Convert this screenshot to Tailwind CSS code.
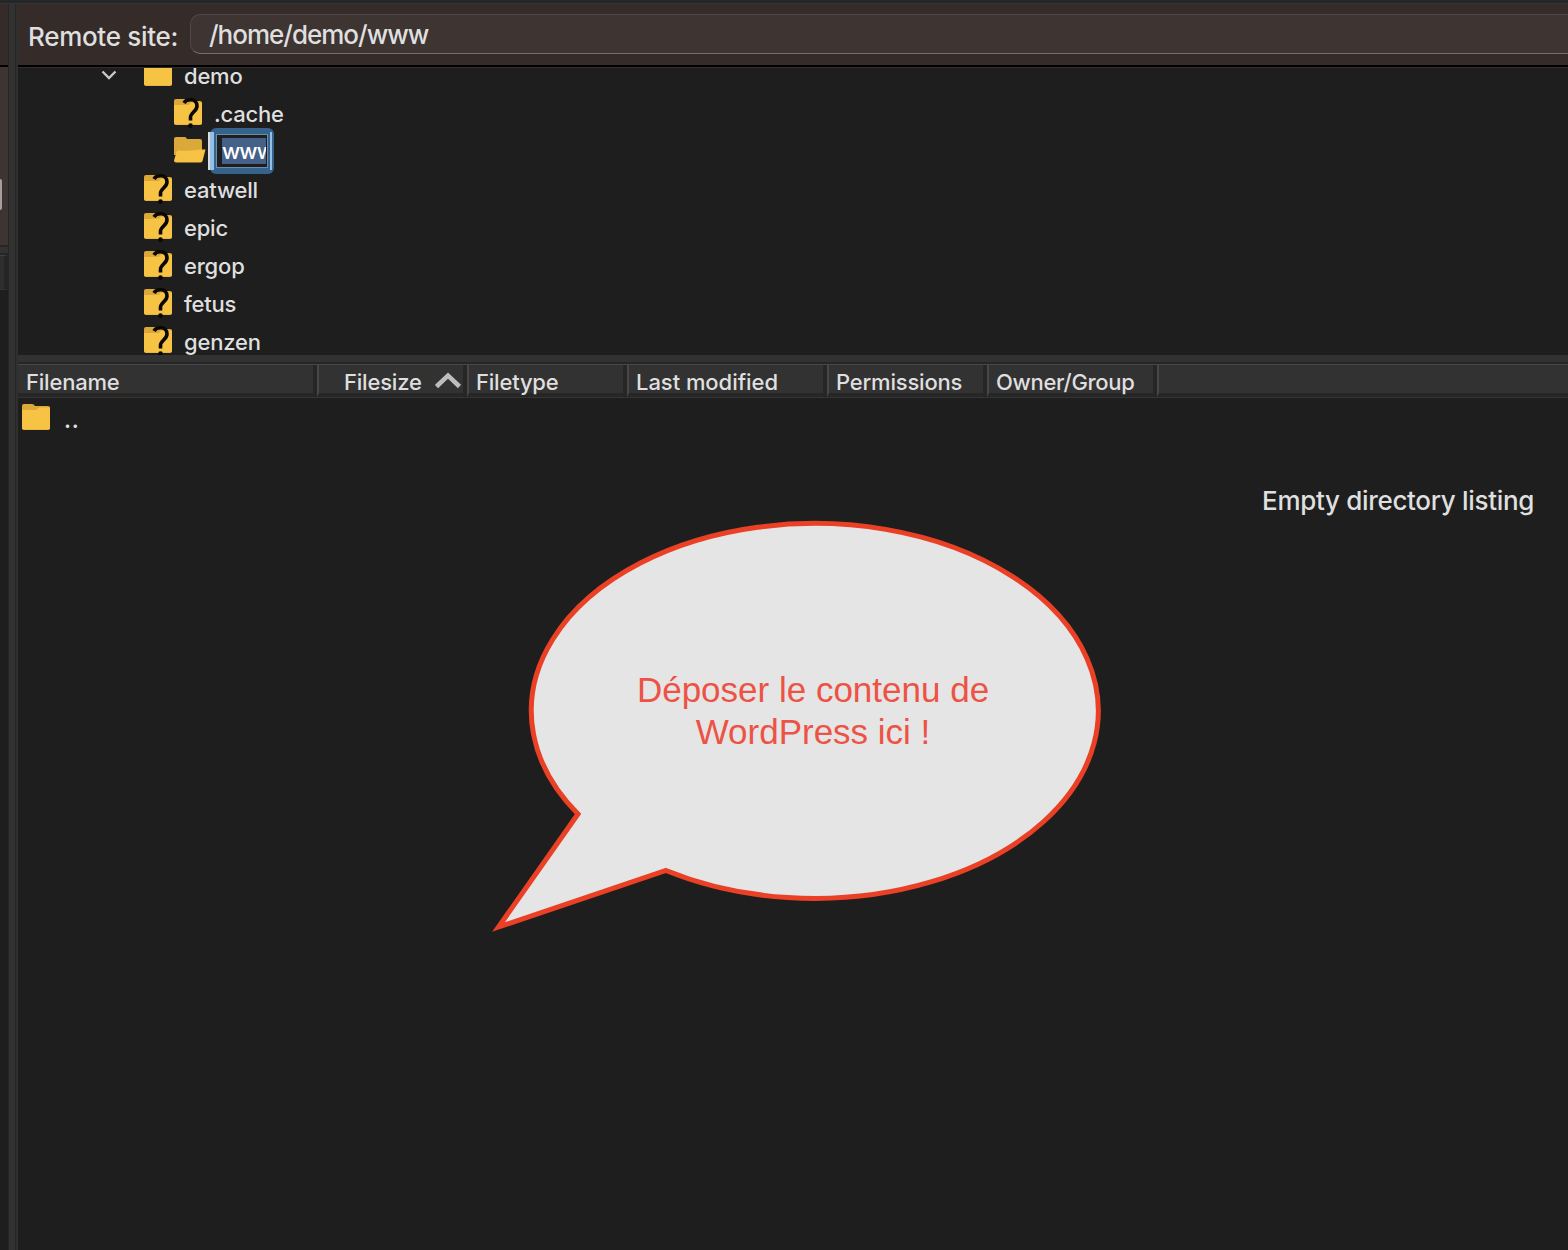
<!DOCTYPE html>
<html lang="en">
<head>
<meta charset="utf-8">
<title>Remote site</title>
<script src="https://cdn.jsdelivr.net/npm/@tailwindcss/browser@4"></script>
</head>
<body class="relative flex h-[1250px] w-[1568px] flex-col overflow-hidden bg-[#1e1e1e] font-['Inter',sans-serif] text-[22px] font-[450] tracking-[-0.2px] text-[#dfdfdf]">
<svg class="hidden">
  <symbol id="folder" viewBox="0 0 28 26"><path d="M0 2Q0 0 2 0H10Q12 0 13 2H26Q28 2 28 4V24Q28 26 26 26H2Q0 26 0 24Z" fill="#dba83a"/><path d="M0 6H14Q15 6 16 4.500Q17 3.500 18 3.500H28V23.500Q28 25.500 26 25.500H2Q0 25.500 0 23.500Z" fill="#f6c344"/></symbol>
  <symbol id="unknown" viewBox="0 0 28 32"><use href="#folder" y="2" width="28" height="26"/><path d="M10 6C11.500 3.400 14.500 2.700 17 2.800C20.500 2.900 23 5.300 23 9C23 14.500 16.500 15.500 16.500 20.500V23.500" fill="none" stroke="#0a0702" stroke-width="3.600"/><circle cx="16.500" cy="28.600" r="2.300" fill="#0a0702"/></symbol>
  <symbol id="open" viewBox="0 0 32 26"><path d="M0 2Q0 0 2 0H11Q12 0 13 2H26Q28 2 28 4V18H0Z" fill="#dba83a"/><path d="M4 13.500Q22 14 25 12.500H31.500L28.500 24Q28 25.500 26 25.500H2Q0 25.500 0 23.500L2.500 15Q3 13.500 4 13.500Z" fill="#f6c344"/></symbol>
</svg>
<div class="h-1 shrink-0 border-b border-[#343434] bg-[#252627]"></div>
<div class="flex min-h-0 flex-1">
  <aside class="flex w-2 shrink-0 flex-col overflow-hidden">
    <div class="h-[61px] shrink-0 bg-[#352b29]"></div>
    <div class="h-0.5 shrink-0 bg-black"></div>
    <div class="h-[178px] shrink-0 bg-[#3e3432] pt-[112px]"><div class="h-[31px] w-0.5 rounded-r-sm bg-[#a5a09f]"></div></div>
    <div class="h-2.5 shrink-0 border-y-2 border-[#262626] bg-[#323232]"></div>
    <div class="h-[35px] shrink-0 border-y border-r-4 border-t-[#414141] border-b-[#353535] border-r-[#242424] bg-[#2e2e2e]"></div>
  </aside>
  <div class="w-[10px] shrink-0 border-l border-r-2 border-l-[#262626] border-r-[#2f2f2f] bg-[#252525]"><div class="h-full w-1.5 bg-[#323232]"></div></div>
  <main class="flex min-w-0 flex-1 flex-col">
    <header class="flex h-[61px] shrink-0 items-start bg-[#352b29] pl-2.5">
      <span class="mt-[13px] w-[162px] text-[26px] leading-10 tracking-[-0.3px] whitespace-nowrap">Remote site:</span>
      <div class="mt-[10px] h-10 flex-1 rounded-l-[10px] border border-r-0 border-[#514746] border-b-[#776e6c] bg-[#3e3432] pl-[18px] text-[26px] leading-10 tracking-[-1px]">/home/demo/www</div>
    </header>
    <div class="h-[3px] shrink-0 border-b border-[#302d2c] bg-black"></div>
    <section class="h-[287px] shrink-0 overflow-hidden">
      <div class="-mt-[11px] flex flex-col">
        <div class="flex h-[38px] items-center"><svg class="-mt-0.5 ml-[83px] h-4 w-4" viewBox="0 0 16 16" fill="none" stroke="#c8c8c8" stroke-width="2.400"><path d="M1.500 4.500L8 11L14.500 4.500"/></svg><svg class="-mt-1.5 ml-[27px] h-[26px] w-7"><use href="#folder"/></svg><span class="ml-3 leading-6">demo</span></div>
        <div class="flex h-[38px] items-center pl-[156px]"><svg class="-mt-0.5 h-8 w-7"><use href="#unknown"/></svg><span class="ml-3">.cache</span></div>
        <div class="flex h-[38px] items-center pl-[156px]"><svg class="-mt-1 h-[26px] w-8"><use href="#open"/></svg>
          <div class="relative -top-px ml-0.5 h-[38px] w-[66px]">
            <div class="absolute top-0 left-0 h-[38px] w-3 bg-[#dcdcdc]"></div>
            <div class="absolute -top-[4px] left-[2px] h-[46px] w-[64px] rounded-md bg-[#36638c]"></div>
            <div class="absolute top-0 left-[2px] h-[38px] w-1 bg-[#93bfe8]"></div>
            <div class="absolute top-0 left-[62px] h-[38px] w-0.5 bg-[#93bfe8]"></div>
            <div class="absolute top-[2px] left-[8px] h-[34px] w-[52px] border border-[#6c8eab] bg-[#1e1e1e]"></div>
            <div class="absolute top-[6px] left-[14px] h-[26px] w-[44px] overflow-hidden bg-[#466189] font-medium leading-[27px] tracking-[-0.9px] text-white">www</div>
          </div>
        </div>
        <div class="flex h-[38px] items-center pl-[126px]"><svg class="-mt-0.5 h-8 w-7"><use href="#unknown"/></svg><span class="ml-3">eatwell</span></div>
        <div class="flex h-[38px] items-center pl-[126px]"><svg class="-mt-0.5 h-8 w-7"><use href="#unknown"/></svg><span class="ml-3">epic</span></div>
        <div class="flex h-[38px] items-center pl-[126px]"><svg class="-mt-0.5 h-8 w-7"><use href="#unknown"/></svg><span class="ml-3">ergop</span></div>
        <div class="flex h-[38px] items-center pl-[126px]"><svg class="-mt-0.5 h-8 w-7"><use href="#unknown"/></svg><span class="ml-3">fetus</span></div>
        <div class="flex h-[38px] items-center pl-[126px]"><svg class="-mt-0.5 h-8 w-7"><use href="#unknown"/></svg><span class="ml-3">genzen</span></div>
      </div>
    </section>
    <div class="h-[9px] shrink-0 border-b-2 border-[#262626] bg-[#323232]"></div>
    <div class="flex h-[34px] shrink-0 border-t border-b border-t-[#474747] border-b-[#353535] bg-[#323232] leading-[34px] whitespace-nowrap">
      <div class="w-[299px] border-r-4 border-b-4 border-[#262626] pl-2"><span>Filename</span></div>
      <div class="flex w-[150px] border-r-4 border-b-4 border-l-2 border-[#262626] border-l-[#474747] pl-[25px]"><span>Filesize</span><svg class="mt-[7px] mr-px ml-auto h-5 w-[27px]" viewBox="0 0 27 20" fill="none" stroke="#bdbdbd" stroke-width="4.500"><path d="M1.500 14.500L13 3.500L24.500 14.500"/></svg></div>
      <div class="w-[160px] border-r-4 border-b-4 border-l-2 border-[#262626] border-l-[#474747] pl-[7px]">Filetype</div>
      <div class="w-[200px] border-r-4 border-b-4 border-l-2 border-[#262626] border-l-[#474747] pl-[7px] tracking-[-0.05px]">Last modified</div>
      <div class="w-[160px] border-r-4 border-b-4 border-l-2 border-[#262626] border-l-[#474747] pl-[7px]">Permissions</div>
      <div class="w-[170px] border-r-4 border-b-4 border-l-2 border-[#262626] border-l-[#474747] pl-[7px] tracking-[-0.3px]">Owner/Group</div>
      <div class="flex-1 border-b-4 border-l-2 border-[#262626] border-l-[#474747]"></div>
    </div>
    <div class="flex h-[40px] shrink-0 items-center pl-1"><svg class="-mt-0.5 h-[26px] w-7"><use href="#folder"/></svg><span class="mt-1 ml-[14px] font-semibold tracking-[0.8px]">..</span></div>
    <div class="mt-[43px] mr-[34px] text-right text-[26px] leading-10 tracking-[-0.33px]"><span>Empty directory listing</span></div>
  </main>
</div>
<div class="absolute top-[510px] left-[485px] h-[430px] w-[630px]">
  <svg class="h-full w-full" viewBox="485 510 630 430"><path d="M578 814L498.500 927L666 870.500A283.500 187.500 0 1 0 578 814Z" fill="#e5e5e5" stroke="#ea4025" stroke-width="5" stroke-miterlimit="10"/></svg>
  <div class="absolute top-[159px] left-[128px] w-[400px] text-center font-['Liberation_Sans',sans-serif] text-[35px] leading-[42px] font-normal tracking-normal text-[#ed5344]">Déposer le contenu de<br>WordPress ici !</div>
</div>
</body>
</html>
